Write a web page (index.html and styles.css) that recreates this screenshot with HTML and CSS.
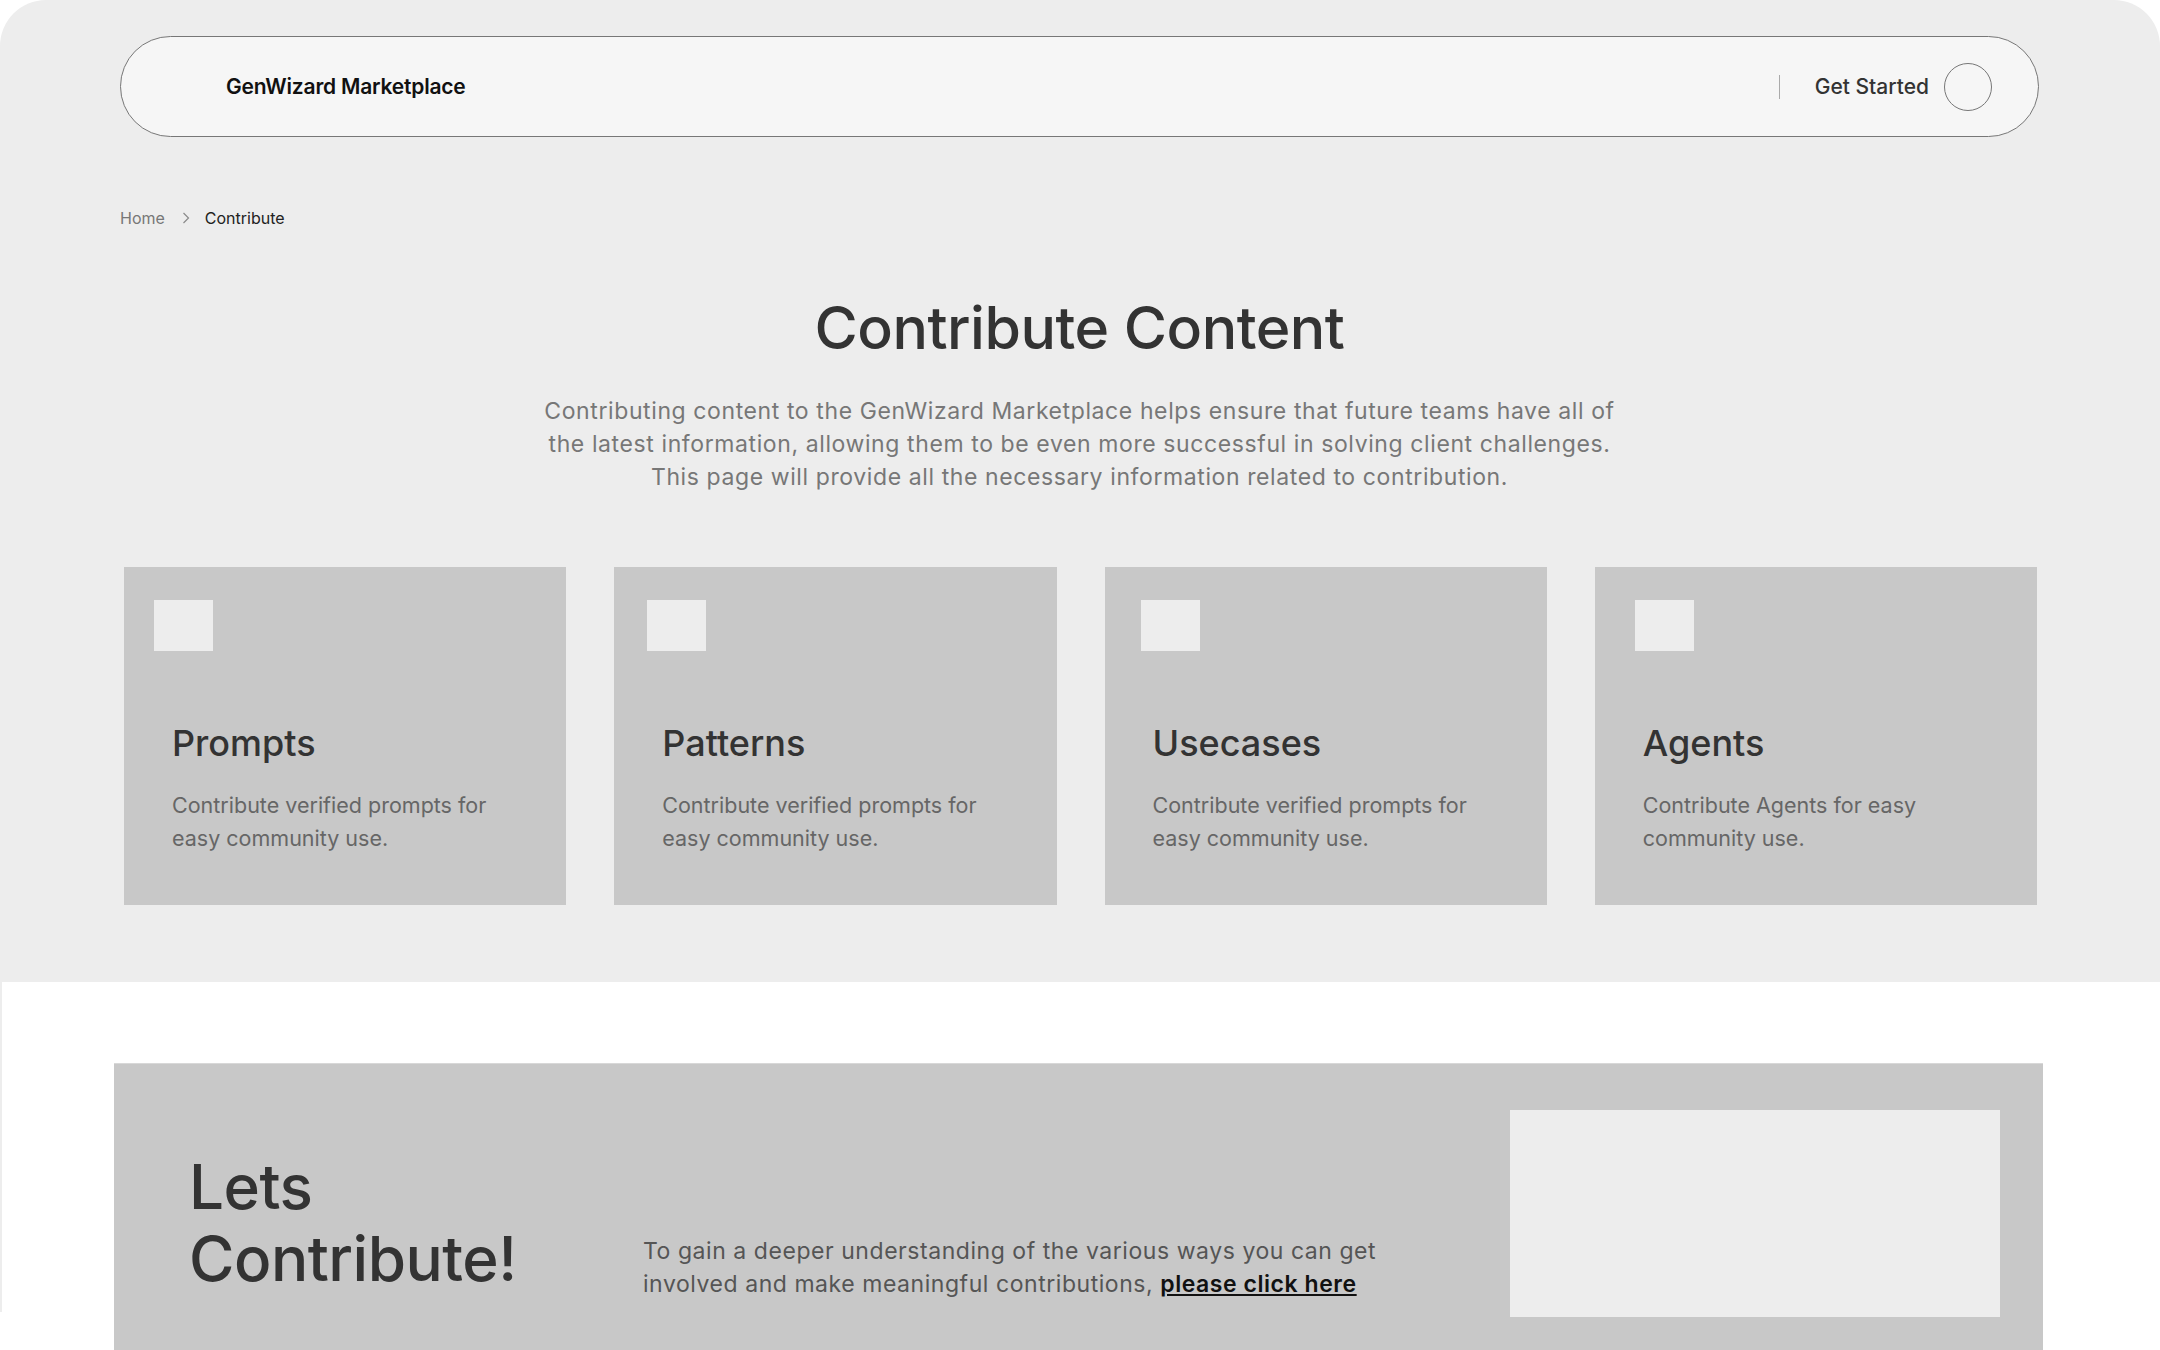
FILE: index.html
```html
<!DOCTYPE html>
<html lang="en">

<head>
    <meta charset="UTF-8">
    <meta name="viewport" content="width=device-width, initial-scale=1.0">
    <title>Contribute Content - GenWizard Marketplace</title>
    <link rel="stylesheet" href="styles.css">
</head>

<body>
    <div class="page">
        <section class="hero">
            <header class="navbar">
                <div class="brand">GenWizard Marketplace</div>
                <div class="nav-right">
                    <span class="nav-divider"></span>
                    <a class="get-started" href="#">Get Started</a>
                    <span class="avatar"></span>
                </div>
            </header>

            <nav class="breadcrumb">
                <a href="#" class="crumb-link">Home</a>
                <svg class="crumb-sep" width="8" height="12" viewBox="0 0 8 12">
                    <path d="M1.5 1 L6.5 6 L1.5 11" fill="none" stroke="#8a8a8a" stroke-width="1.2" />
                </svg>
                <span class="crumb-current">Contribute</span>
            </nav>

            <h1 class="page-title">Contribute Content</h1>
            <p class="page-intro">
                Contributing content to the GenWizard Marketplace helps ensure that future teams have all of<br>
                the latest information, allowing them to be even more successful in solving client challenges.<br>
                This page will provide all the necessary information related to contribution.
            </p>

            <div class="card-row">
                <div class="card">
                    <div class="card-icon"></div>
                    <h2 class="card-title">Prompts</h2>
                    <p class="card-text">Contribute verified prompts for easy community use.</p>
                </div>
                <div class="card">
                    <div class="card-icon"></div>
                    <h2 class="card-title">Patterns</h2>
                    <p class="card-text">Contribute verified prompts for easy community use.</p>
                </div>
                <div class="card">
                    <div class="card-icon"></div>
                    <h2 class="card-title">Usecases</h2>
                    <p class="card-text">Contribute verified prompts for easy community use.</p>
                </div>
                <div class="card">
                    <div class="card-icon"></div>
                    <h2 class="card-title">Agents</h2>
                    <p class="card-text">Contribute Agents for easy community use.</p>
                </div>
            </div>
        </section>

        <section class="lower">
            <div class="banner">
                <div class="banner-text">
                    <h2 class="banner-title">Lets<br>Contribute!</h2>
                    <p class="banner-copy">
                        To gain a deeper understanding of the various ways you can get<br>
                        involved and make meaningful contributions, <a href="#" class="banner-link">please click here</a>
                    </p>
                </div>
                <div class="banner-image"></div>
            </div>
        </section>
    </div>
</body>

</html>
```

FILE: styles.css
```css
body {
    margin: 0;
    background-color: #ffffff;
    font-family: 'Inter', 'Liberation Sans', sans-serif;
    color: #333;
}

.page {
    height: 100vh;
    overflow: hidden;
}

/* top grey area */
.hero {
    background-color: #ededed;
    border-radius: 46px 46px 0 0;
    padding: 36px 121px 0 120px;
    height: 982px;
    box-sizing: border-box;
}

.navbar {
    height: 101px;
    box-sizing: border-box;
    border: 1.5px solid #777;
    border-radius: 51px;
    background-color: #f6f6f6;
    display: flex;
    align-items: center;
    justify-content: space-between;
    padding: 0 46px 0 105px;
}

.brand {
    font-size: 21px;
    font-weight: 600;
    color: #111;
    letter-spacing: -0.2px;
}

.nav-right {
    display: flex;
    align-items: center;
}

.nav-divider {
    width: 1px;
    height: 24px;
    background-color: #aaa;
    margin-right: 35px;
}

.get-started {
    font-size: 21px;
    font-weight: 500;
    color: #333;
    text-decoration: none;
}

.avatar {
    width: 48px;
    height: 48px;
    box-sizing: border-box;
    border: 1.5px solid #777;
    border-radius: 50%;
    margin-left: 15px;
}

.breadcrumb {
    display: flex;
    align-items: center;
    margin-top: 70px;
    height: 22px;
    font-size: 16px;
}

.crumb-link {
    color: #777;
    text-decoration: none;
}

.crumb-sep {
    margin: 0 15px 0 17px;
}

.crumb-current {
    color: #222;
}

.page-title {
    margin: 63px 0 0;
    text-align: center;
    font-size: 59px;
    line-height: 72px;
    font-weight: 500;
    letter-spacing: -0.5px;
    color: #333;
}

.page-intro {
    margin: 31px auto 0;
    text-align: center;
    font-size: 23px;
    line-height: 33px;
    letter-spacing: 0.6px;
    color: #777;
}

.card-row {
    display: grid;
    grid-template-columns: repeat(4, 1fr);
    gap: 48px;
    margin-top: 73px;
    padding: 0 2px 0 4px;
}

.card {
    background-color: #c8c8c8;
    height: 338px;
    box-sizing: border-box;
    padding: 33px 30px 0 48px;
}

.card-icon {
    width: 59px;
    height: 51px;
    background-color: #ededed;
    margin-left: -18px;
}

.card:nth-child(2) .card-icon {
    margin-left: -15px;
}

.card:nth-child(3) .card-icon {
    margin-left: -12px;
}

.card:nth-child(4) .card-icon {
    margin-left: -8px;
}

.card-title {
    margin: 70px 0 0;
    font-size: 36px;
    line-height: 44px;
    font-weight: 500;
    color: #333;
}

.card-text {
    margin: 24px 0 0;
    max-width: 330px;
    font-size: 21.5px;
    line-height: 33px;
    color: #666;
}

/* lower white area */
.lower {
    padding: 81px 117px 0 114px;
    position: relative;
}

.lower::before {
    content: "";
    position: absolute;
    left: 0;
    top: 0;
    width: 2px;
    height: 330px;
    background-color: #ededed;
}

.banner {
    background-color: #c8c8c8;
    border-top: 1px solid #d8d8d8;
    height: 320px;
    box-sizing: border-box;
    display: flex;
    justify-content: space-between;
    padding: 46px 43px 0 75px;
}

.banner-text {
    display: flex;
    align-items: flex-start;
    padding-top: 41px;
}

.banner-title {
    margin: 0;
    width: 454px;
    font-size: 62px;
    line-height: 72px;
    font-weight: 500;
    letter-spacing: -0.5px;
    color: #333;
}

.banner-copy {
    margin: 84px 0 0;
    width: 780px;
    font-size: 23px;
    line-height: 33px;
    letter-spacing: 0.55px;
    color: #555;
}

.banner-link {
    color: #111;
    font-weight: 600;
    text-decoration: underline;
}

.banner-image {
    width: 490px;
    height: 207px;
    background-color: #ededed;
}
```
